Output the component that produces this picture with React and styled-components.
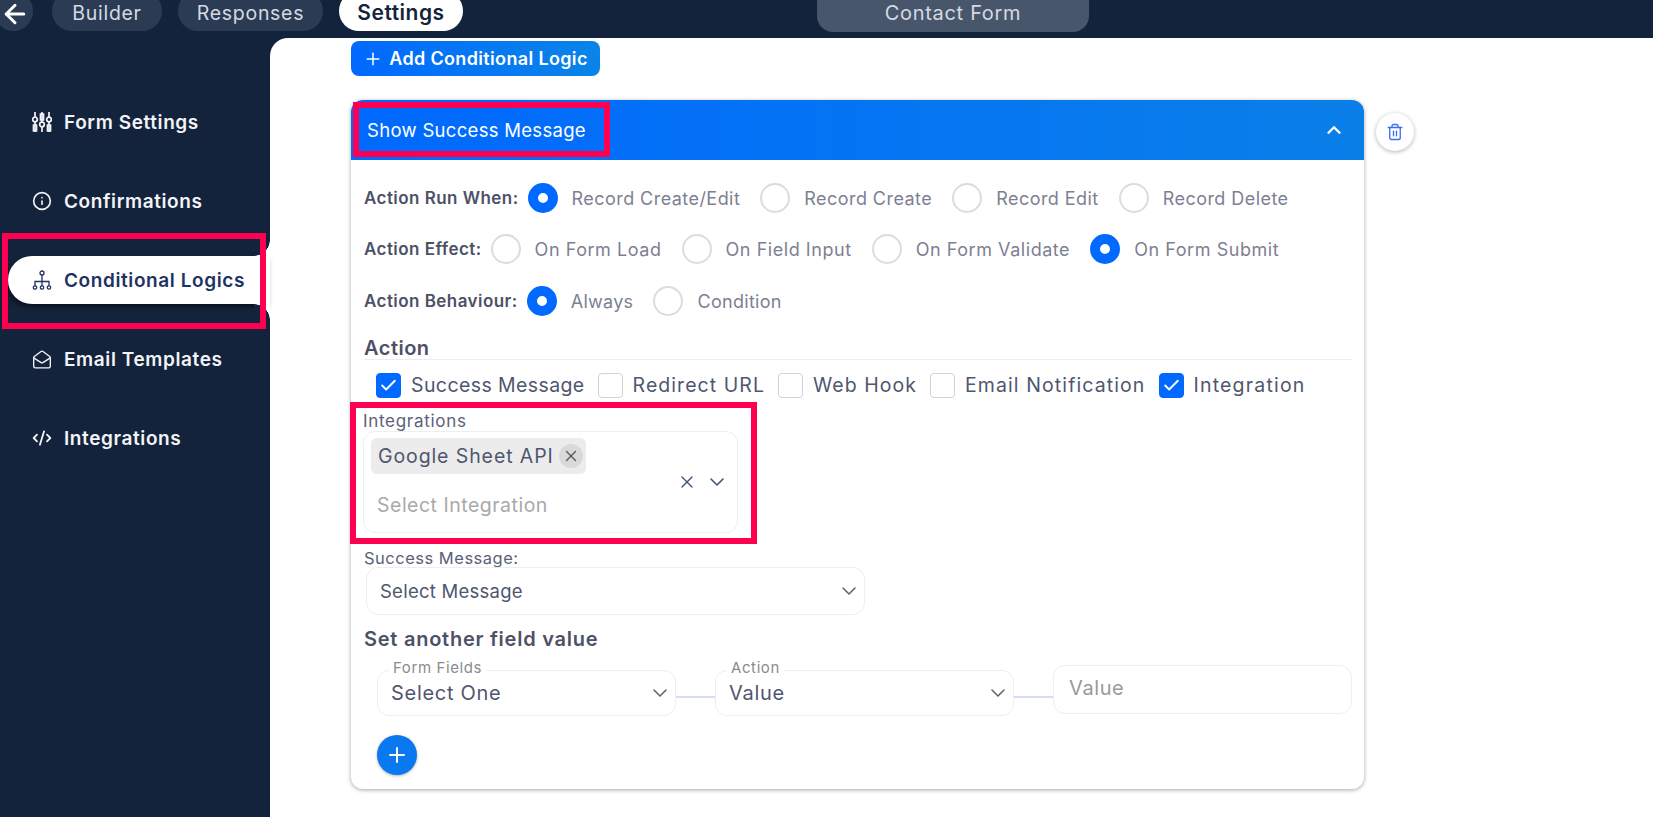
import React from "react";
import styled, { createGlobalStyle } from "styled-components";
import {
  ArrowLeft,
  Check,
  ChevronDown,
  ChevronUp,
  CodeXml,
  Info,
  MailOpen,
  Plus,
  Trash2,
  X,
} from "lucide-react";

const GlobalStyle = createGlobalStyle`
  html, body {
    margin: 0;
    height: 100%;
    overflow: hidden;
    background: #14233c;
    font-family: "Inter", "Open Sans", sans-serif;
  }
  * { box-sizing: border-box; }
`;

const Page = styled.div`
  width: 1653px;
  height: 817px;
  display: flex;
  flex-direction: column;
  overflow: hidden;
  background: #14233c;
`;

const TopBar = styled.div`
  height: 38px;
  flex: none;
  display: grid;
  grid-template-columns: 817px 272px 1fr;
`;

const TabGroup = styled.div`
  display: flex;
  align-items: flex-start;
  margin-left: -6px;
`;

const BackButton = styled.div`
  width: 39px;
  height: 40px;
  margin-top: -9px;
  margin-right: 19px;
  border-radius: 50%;
  background: #2c3b54;
  color: #fff;
  display: flex;
  align-items: center;
  justify-content: center;
  padding-top: 8px;
  svg {
    margin-top: -3px;
    margin-left: 3px;
  }
`;

const Tab = styled.div`
  height: 40px;
  margin-top: -9px;
  margin-right: 16px;
  width: ${(props) => props.$width}px;
  border-radius: 20px;
  padding-top: 8px;
  text-align: center;
  font-size: ${(props) => (props.$active ? 21 : 19.5)}px;
  letter-spacing: ${(props) => (props.$active ? 0.5 : 0.7)}px;
  line-height: 28px;
  font-weight: ${(props) => (props.$active ? 600 : 400)};
  color: ${(props) => (props.$active ? "#14233c" : "#d5dae2")};
  background: ${(props) => (props.$active ? "#fff" : "#2c3b54")};
`;

const FormTitle = styled.div`
  height: 32px;
  border-radius: 0 0 16px 16px;
  background: #48566b;
  color: #d5dae2;
  font-size: 20px;
  letter-spacing: 0.7px;
  line-height: 27px;
  text-align: center;
`;

const Body = styled.div`
  flex: 1;
  display: flex;
  min-height: 0;
`;

const Sidebar = styled.nav`
  width: 270px;
  flex: none;
  padding-top: 60px;
  position: relative;
`;

const NavItem = styled.div`
  height: 48px;
  margin-bottom: 31px;
  margin-left: 8px;
  padding-left: 24px;
  display: flex;
  align-items: center;
  gap: 12px;
  font-size: 19px;
  letter-spacing: 0.6px;
  font-weight: 600;
  position: relative;
  color: ${(props) => (props.$active ? "#1e3264" : "#f2f4f7")};
  background: ${(props) => (props.$active ? "#fff" : "transparent")};
  border-radius: 24px 0 0 24px;
  box-shadow: ${(props) =>
    props.$active ? "-2px 3px 5px rgba(0, 0, 0, 0.5)" : "none"};
  ${(props) =>
    props.$active &&
    `
    &::before, &::after {
      content: "";
      position: absolute;
      right: 0;
      width: 16px;
      height: 16px;
    }
    &::before {
      top: -16px;
      background: radial-gradient(circle at 0 0, #14233c 15.5px, #fff 16px);
    }
    &::after {
      bottom: -16px;
      background: radial-gradient(circle at 0 100%, #14233c 15.5px, #fff 16px);
    }
  `}
`;

const NavIcon = styled.span`
  width: 20px;
  height: 22px;
  display: flex;
  align-items: center;
  justify-content: center;
  flex: none;
`;

const NavHighlight = styled.div`
  position: absolute;
  left: 2px;
  top: 195px;
  width: 264px;
  height: 96px;
  border: 6px solid #ff0050;
`;

const Main = styled.main`
  flex: 1;
  background: #fff;
  border-top-left-radius: 18px;
  padding: 3px 0 0 81px;
`;

const AddLogicButton = styled.div`
  width: 249px;
  height: 35px;
  border-radius: 8px;
  background: linear-gradient(90deg, #0069ff, #0a84e8);
  color: #fff;
  display: flex;
  align-items: center;
  justify-content: center;
  gap: 6px;
  font-size: 18px;
  letter-spacing: 0.35px;
  font-weight: 600;
  white-space: nowrap;
`;

const CardRow = styled.div`
  display: flex;
  align-items: flex-start;
  gap: 12px;
  margin-top: 24px;
`;

const Card = styled.section`
  width: 1013px;
  height: 689px;
  border-radius: 12px;
  background: #fff;
  box-shadow: 0 1px 4px rgba(0, 0, 0, 0.35);
`;

const CardHeader = styled.header`
  height: 60px;
  border-radius: 12px 12px 0 0;
  background: linear-gradient(90deg, #0069ff, #0a7fe8);
  display: flex;
  align-items: center;
  justify-content: space-between;
  padding: 0 19px 0 2px;
  color: #fff;
`;

const HeaderTitle = styled.div`
  width: 257px;
  height: 55px;
  margin-top: -1px;
  border: 6px solid #ff0050;
  padding-left: 8px;
  display: flex;
  align-items: center;
  font-size: 18.5px;
  letter-spacing: 0.3px;
  white-space: nowrap;
`;

const DeleteButton = styled.div`
  width: 38px;
  height: 38px;
  margin-top: 13px;
  border-radius: 50%;
  background: #fff;
  color: #3d6ff0;
  box-shadow: 0 1px 4px rgba(0, 0, 0, 0.3);
  display: flex;
  align-items: center;
  justify-content: center;
`;

const CardBody = styled.div`
  padding: 23px 12px 0 13px;
`;

const RadioRow = styled.div`
  height: 30px;
  margin-bottom: ${(props) => props.$gap}px;
  display: flex;
  align-items: center;
`;

const RowLabel = styled.span`
  font-size: 17px;
  letter-spacing: 0.45px;
  font-weight: 600;
  color: #4d5166;
  margin-right: 9px;
  white-space: nowrap;
`;

const Radio = styled.span`
  width: 30px;
  height: 30px;
  border-radius: 50%;
  flex: none;
  background: #fff;
  border: ${(props) =>
    props.$checked ? "10px solid #0069ff" : "2px solid #dcdcdc"};
`;

const RadioText = styled.span`
  font-size: 18px;
  letter-spacing: ${(props) => props.$spacing}px;
  color: #7d7f92;
  margin: 0 20px 0 14px;
  white-space: nowrap;
`;

const ActionHeading = styled.h3`
  margin: 1px 0 0;
  height: 24px;
  line-height: 24px;
  font-size: 20px;
  letter-spacing: 0.5px;
  font-weight: 600;
  color: #4d5166;
`;

const Divider = styled.div`
  height: 1px;
  margin-top: -1px;
  background: #ececec;
  margin-bottom: 12px;
`;

const CheckRow = styled.div`
  display: flex;
  align-items: center;
  padding-left: 12px;
  height: 26px;
`;

const CheckBox = styled.span`
  width: 25px;
  height: 25px;
  flex: none;
  border-radius: 4px;
  display: flex;
  align-items: center;
  justify-content: center;
  color: #fff;
  background: ${(props) => (props.$checked ? "#0069ff" : "#fff")};
  border: 1.5px solid ${(props) => (props.$checked ? "#0069ff" : "#cfd2d8")};
`;

const CheckText = styled.span`
  font-size: 19.5px;
  letter-spacing: ${(props) => props.$spacing}px;
  color: #4f566f;
  margin: 0 13px 0 10px;
  white-space: nowrap;
`;

const IntegrationBox = styled.div`
  width: 407px;
  height: 142px;
  margin: 4px 0 0 -14px;
  border: 6px solid #ff0050;
  padding: 3px 0 0 7px;
`;

const FieldLabel = styled.div`
  font-size: 17px;
  letter-spacing: 0.7px;
  line-height: 21px;
  margin-bottom: -1px;
  color: #5b6178;
`;

const MultiSelect = styled.div`
  width: 375px;
  height: 102px;
  border: 1.5px solid #eeeeee;
  border-radius: 12px;
  padding: 6px 8px 0 7px;
  display: flex;
  justify-content: space-between;
`;

const Chips = styled.div`
  display: flex;
  flex-direction: column;
  align-items: flex-start;
`;

const Chip = styled.div`
  height: 36px;
  width: 215px;
  border-radius: 6px;
  background: #ececec;
  display: flex;
  align-items: center;
  justify-content: space-between;
  padding: 0 3px 0 7px;
  font-size: 19.5px;
  letter-spacing: 0.9px;
  color: #4f566f;
  white-space: nowrap;
`;

const ChipClose = styled.span`
  width: 24px;
  height: 24px;
  border-radius: 50%;
  background: #d9d9d9;
  color: #555;
  display: flex;
  align-items: center;
  justify-content: center;
`;

const Placeholder = styled.div`
  font-size: 19.5px;
  letter-spacing: 0.5px;
  color: #a9a9a9;
  margin: 19px 0 0 6px;
  white-space: nowrap;
`;

const SelectIcons = styled.div`
  display: flex;
  align-items: center;
  gap: 8px;
  padding-bottom: 6px;
  color: #43527a;
`;

const MessageLabel = styled(FieldLabel)`
  margin-top: 4px;
  margin-bottom: 0;
  height: 19px;
  line-height: 20px;
  overflow: hidden;
  font-size: 16.5px;
  letter-spacing: 0.5px;
`;

const SelectBox = styled.div`
  width: ${(props) => props.$width}px;
  height: ${(props) => props.$height}px;
  margin-left: ${(props) => props.$left || 0}px;
  flex: none;
  position: relative;
  border: 1.5px solid #eeeeee;
  border-radius: 12px;
  display: flex;
  align-items: center;
  justify-content: space-between;
  padding: 0 3px 0 13px;
  font-size: ${(props) => (props.$small ? 18.5 : 20)}px;
  letter-spacing: ${(props) => (props.$small ? 0.25 : 0.7)}px;
  color: #4f566f;
  background: #fff;
  svg {
    color: #666;
  }
`;

const Legend = styled.span`
  position: absolute;
  left: 11px;
  top: -11px;
  padding: 0 4px;
  background: #fff;
  font-size: 15px;
  letter-spacing: 0.6px;
  line-height: 16px;
  color: #8b8b8b;
`;

const SectionTitle = styled.h4`
  margin: 12px 0 0;
  height: 24px;
  line-height: 24px;
  font-size: 20px;
  letter-spacing: 0.75px;
  font-weight: 600;
  color: #4d5166;
`;

const FieldRow = styled.div`
  display: flex;
  align-items: flex-start;
  margin: 19px 0 0 13px;
`;

const Connector = styled.span`
  width: 39px;
  height: 2px;
  margin-top: 26px;
  flex: none;
  background: #d4dcfa;
`;

const ValueInput = styled.div`
  width: 299px;
  height: 49px;
  margin-top: -5px;
  border: 1.5px solid #eeeeee;
  border-radius: 12px;
  padding-left: 15px;
  line-height: 44px;
  font-size: 20px;
  letter-spacing: 0.6px;
  color: #9a9a9a;
`;

const RoundAdd = styled.div`
  width: 40px;
  height: 40px;
  margin: 19px 0 0 13px;
  border-radius: 50%;
  background: #0a78ee;
  color: #fff;
  box-shadow: 0 1px 3px rgba(0, 0, 0, 0.3);
  display: flex;
  align-items: center;
  justify-content: center;
`;

const SlidersIcon = () => (
  <svg width="20" height="22" viewBox="0 0 20 22" fill="none" stroke="currentColor" strokeWidth="1.7">
    <path d="M3 1v5M3 11v10M10 1v10M10 16v5M17 1v5M17 11v10" />
    <circle cx="3" cy="8.5" r="2.3" />
    <circle cx="10" cy="13.5" r="2.3" />
    <circle cx="17" cy="8.5" r="2.3" />
    <path d="M1.5 14h3v6h-3zM15.5 14h3v6h-3zM8.5 3h3v6h-3z" />
  </svg>
);

const BranchIcon = () => (
  <svg width="20" height="20" viewBox="0 0 20 20" fill="none" stroke="currentColor" strokeWidth="1.3">
    <circle cx="10" cy="3" r="2" />
    <path d="M10 5v11M3 16v-4.5h14V16" />
    <circle cx="3" cy="17.5" r="1.7" />
    <circle cx="10" cy="17.5" r="1.7" />
    <circle cx="17" cy="17.5" r="1.7" />
  </svg>
);

const navItems = [
  { label: "Form Settings", icon: <SlidersIcon /> },
  { label: "Confirmations", icon: <Info size={20} strokeWidth={2} /> },
  { label: "Conditional Logics", icon: <BranchIcon />, active: true },
  { label: "Email Templates", icon: <MailOpen size={21} strokeWidth={1.6} /> },
  { label: "Integrations", icon: <CodeXml size={20} strokeWidth={2.2} /> },
];

const radioRows = [
  {
    label: "Action Run When:",
    gap: 21,
    spacing: 0.45,
    options: [
      ["Record Create/Edit", true],
      ["Record Create", false],
      ["Record Edit", false],
      ["Record Delete", false],
    ],
  },
  {
    label: "Action Effect:",
    gap: 22,
    spacing: 0.55,
    options: [
      ["On Form Load", false],
      ["On Field Input", false],
      ["On Form Validate", false],
      ["On Form Submit", true],
    ],
  },
  {
    label: "Action Behaviour:",
    gap: 20,
    spacing: 0.3,
    options: [
      ["Always", true],
      ["Condition", false],
    ],
  },
];

const actionChecks = [
  { text: "Success Message", checked: true, spacing: 0.4 },
  { text: "Redirect URL", checked: false, spacing: 1.05 },
  { text: "Web Hook", checked: false, spacing: 1.05 },
  { text: "Email Notification", checked: false, spacing: 1.1 },
  { text: "Integration", checked: true, spacing: 1.2 },
];

function App() {
  return (
    <Page>
      <GlobalStyle />
      <TopBar>
        <TabGroup>
          <BackButton>
            <ArrowLeft size={30} strokeWidth={2.4} />
          </BackButton>
          <Tab $width={110}>Builder</Tab>
          <Tab $width={145}>Responses</Tab>
          <Tab $width={124} $active>
            Settings
          </Tab>
        </TabGroup>
        <FormTitle>Contact Form</FormTitle>
      </TopBar>
      <Body>
        <Sidebar>
          {navItems.map((item) => (
            <NavItem key={item.label} $active={item.active}>
              <NavIcon>{item.icon}</NavIcon>
              {item.label}
            </NavItem>
          ))}
          <NavHighlight />
        </Sidebar>
        <Main>
          <AddLogicButton>
            <Plus size={20} strokeWidth={1.8} />
            Add Conditional Logic
          </AddLogicButton>
          <CardRow>
            <Card>
              <CardHeader>
                <HeaderTitle>Show Success Message</HeaderTitle>
                <ChevronUp size={22} strokeWidth={2.6} />
              </CardHeader>
              <CardBody>
                {radioRows.map((row) => (
                  <RadioRow key={row.label} $gap={row.gap}>
                    <RowLabel>{row.label}</RowLabel>
                    {row.options.map(([text, checked]) => (
                      <React.Fragment key={text}>
                        <Radio $checked={checked} />
                        <RadioText $spacing={row.spacing}>{text}</RadioText>
                      </React.Fragment>
                    ))}
                  </RadioRow>
                ))}
                <ActionHeading>Action</ActionHeading>
                <Divider />
                <CheckRow>
                  {actionChecks.map((item) => (
                    <React.Fragment key={item.text}>
                      <CheckBox $checked={item.checked}>
                        {item.checked && <Check size={19} strokeWidth={2.4} />}
                      </CheckBox>
                      <CheckText $spacing={item.spacing}>{item.text}</CheckText>
                    </React.Fragment>
                  ))}
                </CheckRow>
                <IntegrationBox>
                  <FieldLabel>Integrations</FieldLabel>
                  <MultiSelect>
                    <Chips>
                      <Chip>
                        Google Sheet API
                        <ChipClose>
                          <X size={18} strokeWidth={1.6} />
                        </ChipClose>
                      </Chip>
                      <Placeholder>Select Integration</Placeholder>
                    </Chips>
                    <SelectIcons>
                      <X size={20} strokeWidth={1.6} />
                      <ChevronDown size={24} strokeWidth={1.6} />
                    </SelectIcons>
                  </MultiSelect>
                </IntegrationBox>
                <MessageLabel>Success Message:</MessageLabel>
                <SelectBox $width={499} $height={48} $left={2} $small>
                  Select Message
                  <ChevronDown size={24} strokeWidth={1.6} />
                </SelectBox>
                <SectionTitle>Set another field value</SectionTitle>
                <FieldRow>
                  <SelectBox $width={299} $height={46}>
                    <Legend>Form Fields</Legend>
                    Select One
                    <ChevronDown size={24} strokeWidth={1.6} />
                  </SelectBox>
                  <Connector />
                  <SelectBox $width={299} $height={46}>
                    <Legend>Action</Legend>
                    Value
                    <ChevronDown size={24} strokeWidth={1.6} />
                  </SelectBox>
                  <Connector />
                  <ValueInput>Value</ValueInput>
                </FieldRow>
                <RoundAdd>
                  <Plus size={24} strokeWidth={2} />
                </RoundAdd>
              </CardBody>
            </Card>
            <DeleteButton>
              <Trash2 size={18} strokeWidth={1.8} />
            </DeleteButton>
          </CardRow>
        </Main>
      </Body>
    </Page>
  );
}

export default App;
